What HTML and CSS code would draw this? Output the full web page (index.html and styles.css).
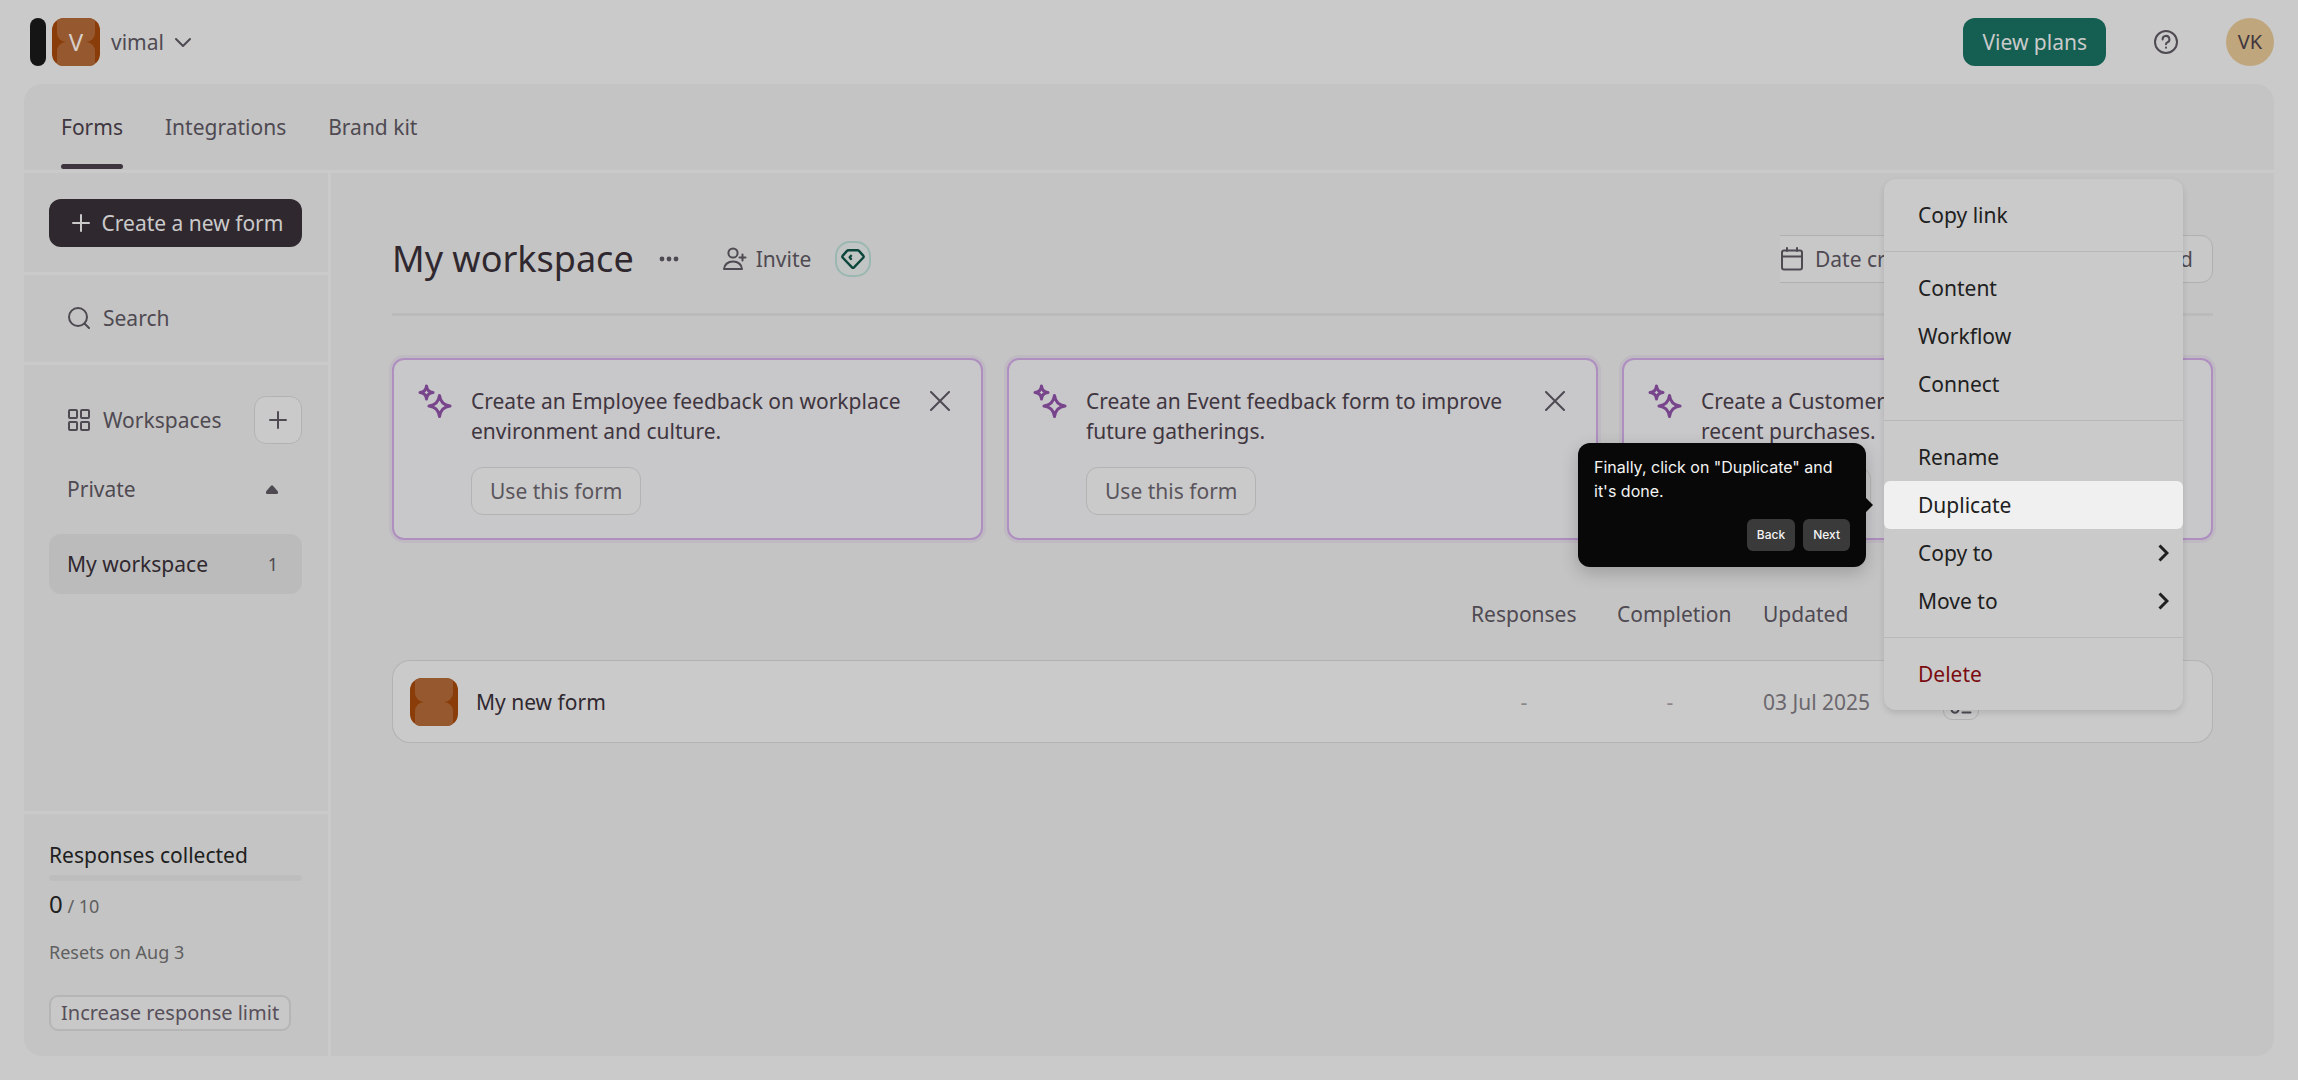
FILE: index.html
```html
<!doctype html>
<html lang="en">
	<head>
		<meta charset="utf-8">
		<meta name="viewport" content="width=device-width, initial-scale=1">
		<title>My workspace</title>
		<link rel="stylesheet" href="styles.css">
	</head>

	<body>
		<!-- top bar -->
		<header class="topbar">
			<span class="logo-bar"></span>
			<button class="account">
				<span class="tile">V</span>
				<span>vimal</span>
				<svg width="16" height="16" viewBox="0 0 16 16" class="line"><path d="M1 5l7 7 7-7"/></svg>
			</button>
			<div class="topbar-right">
				<button class="btn btn-plans">View plans</button>
				<button class="icon-btn" aria-label="Help">
					<svg width="24" height="24" viewBox="0 0 24 24" class="line"><circle cx="12" cy="12" r="11"/><path d="M8.600 9.500a3.400 3.400 0 1 1 4.800 2.900c-.9.4-1.400.8-1.400 1.800"/><path d="M12 17.600v.1"/></svg>
				</button>
				<button class="avatar">VK</button>
			</div>
		</header>

		<div class="panel">
			<nav class="tabs">
				<a href="#" class="tab active">Forms</a>
				<a href="#" class="tab">Integrations</a>
				<a href="#" class="tab">Brand kit</a>
			</nav>

			<div class="columns">
				<aside class="sidebar">
					<div class="side-box">
						<button class="btn btn-create">
							<svg width="18" height="18" viewBox="0 0 18 18" class="line"><path d="M9 1v16M1 9h16"/></svg>
							Create a new form
						</button>
					</div>
					<div class="side-box side-search">
						<button class="side-link">
							<svg width="22" height="22" viewBox="0 0 22 22" class="line"><circle cx="10" cy="10" r="9"/><path d="M16.500 16.500l4.500 4.500"/></svg>
							Search
						</button>
					</div>
					<div class="side-box side-spaces">
						<div class="side-row">
							<span class="side-link">
								<svg width="22" height="22" viewBox="0 0 22 22" class="line"><rect x="1" y="1" width="8" height="8" rx="1"/><rect x="13" y="1" width="8" height="8" rx="1"/><rect x="1" y="13" width="8" height="8" rx="1"/><rect x="13" y="13" width="8" height="8" rx="1"/></svg>
								Workspaces
							</span>
							<button class="btn btn-light btn-square" aria-label="Add workspace">
								<svg width="18" height="18" viewBox="0 0 18 18" class="line"><path d="M9 1v16M1 9h16"/></svg>
							</button>
						</div>
						<button class="side-group">
							Private
							<svg width="12" height="9" viewBox="0 0 12 9"><path d="M5 .8Q6-.3 7 .8l4.600 5.200Q13 9 10.500 9h-9Q-1 9 .4 6z" fill="currentColor"/></svg>
						</button>
						<a href="#" class="side-item">My workspace <span class="count">1</span></a>
					</div>
					<div class="side-box usage">
						<h2>Responses collected</h2>
						<div class="meter"></div>
						<p class="used"><b>0</b> / 10</p>
						<p class="resets">Resets on Aug 3</p>
						<button class="btn-limit">Increase response limit</button>
					</div>
				</aside>

				<main class="main">
					<div class="heading">
						<h1>My workspace</h1>
						<button class="icon-btn dots" aria-label="More">
							<svg width="20" height="6" viewBox="0 0 20 6"><g fill="currentColor"><circle cx="3" cy="3" r="2.400"/><circle cx="10" cy="3" r="2.400"/><circle cx="17" cy="3" r="2.400"/></g></svg>
						</button>
						<button class="invite">
							<svg width="24" height="24" viewBox="0 0 24 24" class="line"><circle cx="10" cy="6" r="4.600"/><path d="M1 22c.3-4.200 3.800-7.600 9-7.600s8.700 3.400 9 7.600zM19.500 7.500v6M16.500 10.500h6"/></svg>
							Invite
						</button>
						<button class="gem" aria-label="Upgrade">
							<svg width="24" height="20" viewBox="0 0 24 20"><path d="M7.500 1.200h9q.9 0 1.500.7l4.400 5q.6.800 0 1.600l-9.400 9.900q-1 1-2 0L1.600 8.500q-.6-.8 0-1.600l4.400-5q.6-.7 1.500-.7zM10 6.800L8.700 8.300 10 9.900" fill="none" stroke="currentColor" stroke-width="2.400" stroke-linecap="round" stroke-linejoin="round"/></svg>
						</button>
						<div class="filters">
							<label class="sort">
								<svg width="22" height="24" viewBox="0 0 22 24" class="line"><rect x="1" y="3.500" width="20" height="19" rx="2"/><path d="M1 9.500h20M6 1v3M16 1v3"/></svg>
								<select aria-label="Sort by">
									<option>Date created</option>
									<option>Last updated</option>
								</select>
							</label>
							<div class="views">
								<button>List</button>
								<button>Grid</button>
							</div>
						</div>
					</div>

					<div class="cards">
						<article class="card">
							<svg width="34" height="34" viewBox="0 0 34 34" class="stars"><path d="M8.500 2q.6 5.900 6.500 6.500-5.900.6-6.500 6.500Q7.900 9.100 2 8.500 7.900 7.900 8.500 2z"/><path d="M21.500 11.500q1.200 9.300 10.500 10.500-9.300 1.200-10.500 10.500Q20.300 23.200 11 22q9.300-1.200 10.500-10.500z"/></svg>
							<div class="card-body">
								<p>Create an Employee feedback on workplace environment and culture.</p>
								<button class="btn btn-light">Use this form</button>
							</div>
							<button class="icon-btn close" aria-label="Dismiss"><svg width="20" height="20" viewBox="0 0 20 20" class="line"><path d="M1 1l18 18M19 1L1 19"/></svg></button>
						</article>
						<article class="card">
							<svg width="34" height="34" viewBox="0 0 34 34" class="stars"><path d="M8.500 2q.6 5.900 6.500 6.500-5.900.6-6.500 6.500Q7.900 9.100 2 8.500 7.900 7.900 8.500 2z"/><path d="M21.500 11.500q1.200 9.300 10.500 10.500-9.300 1.200-10.500 10.500Q20.300 23.200 11 22q9.300-1.200 10.500-10.500z"/></svg>
							<div class="card-body">
								<p>Create an Event feedback form to improve future gatherings.</p>
								<button class="btn btn-light">Use this form</button>
							</div>
							<button class="icon-btn close" aria-label="Dismiss"><svg width="20" height="20" viewBox="0 0 20 20" class="line"><path d="M1 1l18 18M19 1L1 19"/></svg></button>
						</article>
						<article class="card">
							<svg width="34" height="34" viewBox="0 0 34 34" class="stars"><path d="M8.500 2q.6 5.900 6.500 6.500-5.900.6-6.500 6.500Q7.900 9.100 2 8.500 7.900 7.900 8.500 2z"/><path d="M21.500 11.500q1.200 9.300 10.500 10.500-9.300 1.200-10.500 10.500Q20.300 23.200 11 22q9.300-1.200 10.500-10.500z"/></svg>
							<div class="card-body">
								<p>Create a Customer feedback form about recent purchases.</p>
								<button class="btn btn-light">Use this form</button>
							</div>
							<button class="icon-btn close" aria-label="Dismiss"><svg width="20" height="20" viewBox="0 0 20 20" class="line"><path d="M1 1l18 18M19 1L1 19"/></svg></button>
						</article>
					</div>

					<table class="forms">
						<thead>
							<tr>
								<th class="col-name"></th>
								<th class="col-num">Responses</th>
								<th class="col-num">Completion</th>
								<th class="col-date">Updated</th>
								<th class="col-apps"></th>
							</tr>
						</thead>
						<tbody>
							<tr>
								<td><a href="#" class="form-name"><span class="tile"></span>My new form</a></td>
								<td class="num">-</td>
								<td class="num">-</td>
								<td class="date">03 Jul 2025</td>
								<td>
									<button class="app-btn" aria-label="Add integration">
										<svg width="22" height="24" viewBox="0 0 22 24" class="line"><path d="M1.500 20c1 3.500 6 3.500 7 0V8M12.500 22.500h8M16.500 3v12"/></svg>
									</button>
								</td>
							</tr>
						</tbody>
					</table>
				</main>
			</div>

			<!-- form menu, with the guide tip beside it -->
			<div class="menu">
				<div class="menu-part">
					<button>Copy link</button>
				</div>
				<div class="menu-part">
					<button>Content</button>
					<button>Workflow</button>
					<button>Connect</button>
				</div>
				<div class="menu-part">
					<button>Rename</button>
					<button class="lit">Duplicate</button>
					<button>Copy to <svg width="11" height="18" viewBox="0 0 11 18"><path d="M1.500 1.500L9 9l-7.500 7.500"/></svg></button>
					<button>Move to <svg width="11" height="18" viewBox="0 0 11 18"><path d="M1.500 1.500L9 9l-7.500 7.500"/></svg></button>
				</div>
				<div class="menu-part">
					<button class="danger">Delete</button>
				</div>
				<div class="tip">
					<p>Finally, click on "Duplicate" and it's done.</p>
					<div class="tip-btns">
						<button>Back</button>
						<button>Next</button>
					</div>
				</div>
			</div>
		</div>
	</body>
</html>
```
FILE: styles.css
```css
*{margin: 0;padding: 0;box-sizing: border-box;}
body{
	display: flex;
	flex-direction: column;
	min-height: 100vh;
	padding: 0 24px 24px;
	background: #cacaca;
	color: #4f4a52;
	font: 21px/30px "Noto Sans", sans-serif;
}
button, select{
	font: inherit;
	color: inherit;
	background: none;
	border: none;
	cursor: pointer;
}
a{ color: inherit; text-decoration: none; }
svg{ display: block; flex: none; }
.line{
	fill: none;
	stroke: currentColor;
	stroke-width: 2;
	stroke-linecap: round;
	stroke-linejoin: round;
}

/* buttons */
.btn{
	display: flex;
	align-items: center;
	justify-content: center;
	height: 48px;
	border-radius: 12px;
	padding: 0 19px;
}
.btn-light{
	background: #cacaca;
	border: 1px solid #b3b3b3;
	padding: 0 18px;
}
.btn-square{ width: 48px; padding: 0; }
.btn-plans{ background: #145f52; color: #cacaca; }
.btn-create{
	width: 100%;
	gap: 12px;
	padding: 0 18px 0 22px;
	background: #30282f;
	color: #cacaca;
}
.icon-btn{ display: flex; align-items: center; justify-content: center; }

/* top bar */
.topbar{
	display: flex;
	align-items: center;
	height: 84px;
	padding-left: 6px;
}
.logo-bar{
	width: 16px;
	height: 48px;
	border-radius: 8px;
	background: #151515;
}
.account{
	display: flex;
	align-items: center;
	gap: 11px;
	margin-left: 6px;
}
.tile{
	display: flex;
	align-items: center;
	justify-content: center;
	width: 48px;
	height: 48px;
	border-radius: 12px;
	background: #8a3d08;
	position: relative;
	overflow: hidden;
	z-index: 0;
	color: #d6cfca;
	font-size: 24px;
}
/* two stacked shapes inside the tile */
.tile:before, .tile:after{
	content: "";
	position: absolute;
	left: 5px;
	right: 5px;
	height: 24px;
	background: #96592f;
	z-index: -1;
}
.tile:before{ top: 0; border-radius: 0 0 9px 9px; }
.tile:after{ bottom: 0; border-radius: 9px 9px 0 0; }
.topbar-right{
	display: flex;
	align-items: center;
	margin-left: auto;
}
.topbar-right .icon-btn{ width: 48px; height: 48px; margin: 0 36px; }
.avatar{
	width: 48px;
	height: 48px;
	border-radius: 50%;
	background: #c0a67c;
	color: #3f3640;
	font-size: 20px;
}

/* panel */
.panel{
	position: relative;
	flex: 1;
	display: flex;
	flex-direction: column;
	background: #c4c4c4;
	border-radius: 18px;
}
.tabs{
	display: flex;
	gap: 42px;
	height: 89px;
	padding: 0 37px;
	border-bottom: 3px solid #cacaca;
}
.tab{
	display: flex;
	align-items: center;
	height: 86px;
	position: relative;
}
.tab.active{ color: #3f3640; }
.tab.active:after{
	content: "";
	position: absolute;
	left: 0;
	right: 0;
	bottom: 1px;
	height: 5px;
	border-radius: 3px;
	background: #3d3440;
}
.columns{ flex: 1; display: flex; }

/* sidebar */
.sidebar{
	display: flex;
	flex-direction: column;
	width: 307px;
	flex: none;
	border-right: 3px solid #cacaca;
}
.side-box{
	padding: 26px 26px 25px 25px;
	border-bottom: 3px solid #cacaca;
}
.side-search{ padding: 28px 44px 29px; }
.side-link{
	display: flex;
	align-items: center;
	gap: 13px;
	height: 30px;
}
.side-spaces{ flex: 1; padding-top: 31px; }
.side-row{
	display: flex;
	align-items: center;
	justify-content: space-between;
	padding-left: 19px;
}
.side-group{
	display: flex;
	align-items: center;
	justify-content: space-between;
	width: 100%;
	height: 60px;
	margin: 15px 0;
	padding: 0 24px 0 18px;
}
.side-item{
	display: flex;
	align-items: center;
	justify-content: space-between;
	height: 60px;
	padding: 0 24px 0 18px;
	border-radius: 12px;
	background: #bbb;
	color: #30282f;
}
.count{ font-size: 18px; color: #4f4a52; }
.usage{ border-bottom: none; color: #5f5f5f; }
.usage h2{
	font-size: 21px;
	font-weight: 400;
	color: #202020;
}
.meter{
	height: 6px;
	margin: 5px 0 8px;
	border-radius: 3px;
	background: #bdbdbd;
}
.used, .resets{ font-size: 18px; }
.used b{ font-size: 24px; font-weight: 400; color: #202020; }
.resets{ margin: 16px 0 28px; }
.btn-limit{
	height: 36px;
	padding: 0 10px;
	border: 2px solid #b5b5b5;
	border-radius: 9px;
	background: #c8c8c8;
	font-size: 20px;
	line-height: 30px;
	color: #574f5a;
}

/* workspace */
.main{
	flex: 1;
	min-width: 0;
	padding: 62px 61px;
}
.heading{
	display: flex;
	align-items: center;
	height: 81px;
	padding-bottom: 31px;
	border-bottom: 3px solid #bbb;
}
h1{
	font-size: 36px;
	font-weight: 400;
	line-height: 48px;
	color: #30282f;
}
.dots{ margin: 0 44px 0 25px; }
.invite{
	display: flex;
	align-items: center;
	gap: 9px;
}
.gem{
	display: flex;
	align-items: center;
	justify-content: center;
	width: 36px;
	height: 36px;
	margin-left: 24px;
	border: 2px solid #9bb8b0;
	border-radius: 15px;
	background: #c1c5c3;
	color: #0d463c;
}
.filters{
	display: flex;
	margin-left: auto;
}
.sort, .views{
	display: flex;
	align-items: center;
	height: 48px;
	border: 1px solid #b0b0b0;
	background: #c8c8c8;
}
.sort{
	gap: 12px;
	padding-left: 1px;
	border-left: none;
	border-radius: 0 12px 12px 0;
}
.sort select{ appearance: none; width: 178px; }
.views{
	gap: 40px;
	width: 207px;
	justify-content: flex-end;
	margin-left: 12px;
	padding: 0 19px;
	border-radius: 12px;
}

/* suggestion cards */
.cards{
	display: grid;
	grid-template-columns: repeat(3, 1fr);
	gap: 24px;
	margin-top: 42px;
}
.card{
	display: flex;
	align-items: flex-start;
	padding: 24px 31px 23px 24px;
	border: 2px solid #ae8fc0;
	border-radius: 12px;
	background: #c8c7ca;
	box-shadow: 0 0 0 3px #bfb9c2;
	color: #3f3640;
}
.stars{
	fill: none;
	stroke: #78458c;
	stroke-width: 3;
	stroke-linejoin: round;
}
.card-body{ flex: 1; margin-left: 19px; padding-top: 2px; }
.card-body .btn{ margin-top: 21px; color: #5a555c; }
.close{ padding: 7px 0; color: #4f4a52; }

/* forms list */
.forms{
	width: 100%;
	margin-top: 47px;
	table-layout: fixed;
	border-collapse: separate;
	border-spacing: 0;
}
.forms th{
	height: 73px;
	padding: 0 20px 19px;
	font-weight: 400;
	text-align: left;
}
.col-num{ width: 146px; }
.col-date{ width: 180px; }
.col-apps{ width: 290px; }
.forms td{
	height: 83px;
	background: #cacaca;
	border-top: 1px solid #b3b3b3;
	border-bottom: 1px solid #b3b3b3;
	padding: 0 20px;
}
.forms td:first-child{
	padding: 0 17px;
	border-left: 1px solid #b3b3b3;
	border-radius: 18px 0 0 18px;
}
.forms td:last-child{
	border-right: 1px solid #b3b3b3;
	border-radius: 0 18px 18px 0;
}
.forms .num{ text-align: center; color: #8a868c; }
.forms .date{ color: #6b676d; white-space: nowrap; }
.form-name{
	display: flex;
	align-items: center;
	gap: 18px;
	color: #30282f;
}
.app-btn{
	display: flex;
	align-items: center;
	justify-content: center;
	width: 36px;
	height: 36px;
	border: 1px solid #b0b0b0;
	border-radius: 9px;
}

/* menu */
.menu{
	position: absolute;
	top: 95px;
	right: 91px;
	width: 299px;
	border-radius: 12px;
	background: #cacaca;
	box-shadow: 0 3px 6px rgba(0, 0, 0, 0.12);
	color: #202020;
}
.menu-part{ padding: 12px 0; }
.menu-part + .menu-part{ border-top: 1px solid #b8b8b8; }
.menu-part button{
	display: flex;
	align-items: center;
	justify-content: space-between;
	width: 100%;
	height: 48px;
	padding: 0 14px 0 34px;
}
.menu-part svg{ fill: none; stroke: #202020; stroke-width: 3; }
.menu-part .lit{ background: #f0f0f0; border-radius: 6px; }
.menu-part .danger{ color: #7a0c10; }

/* guide tip */
.tip{
	position: absolute;
	top: 264px;
	right: calc(100% + 18px);
	width: 288px;
	padding: 12px 16px 16px;
	border-radius: 12px;
	background: #080808;
	box-shadow: 0 6px 18px rgba(0, 0, 0, 0.2);
	color: #f4f4f4;
	font: 16px/24px Inter, sans-serif;
}
.tip:after{
	content: "";
	position: absolute;
	top: 55px;
	left: 100%;
	border: 7px solid transparent;
	border-left-color: #080808;
	border-right: none;
}
.tip-btns{
	display: flex;
	justify-content: flex-end;
	gap: 8px;
	margin-top: 16px;
}
.tip-btns button{
	height: 32px;
	padding: 0 10px;
	border-radius: 6px;
	background: #3a3a3a;
	font-size: 12px;
	font-weight: 500;
}
```
